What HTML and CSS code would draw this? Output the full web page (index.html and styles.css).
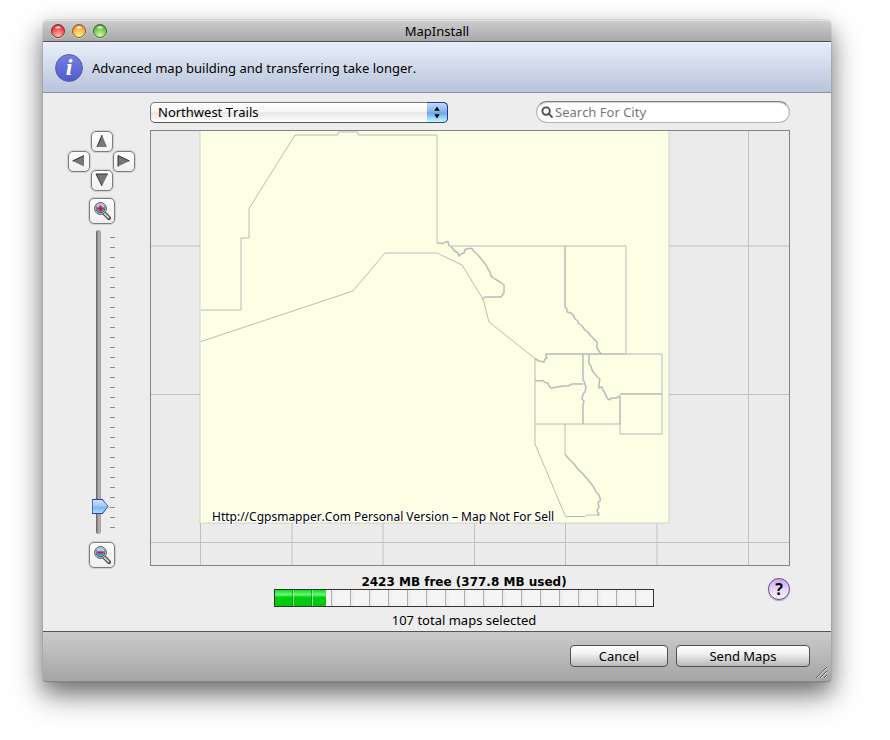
FILE: index.html
```html
<!DOCTYPE html>
<html lang="en">
<head>
<meta charset="utf-8">
<title>MapInstall</title>
<link rel="stylesheet" href="styles.css">
</head>
<body>
<main class="window">
  <header class="titlebar">
    <div class="lights">
      <button class="light red" type="button" aria-label="Close"></button>
      <button class="light amber" type="button" aria-label="Minimize"></button>
      <button class="light green" type="button" aria-label="Zoom"></button>
    </div>
    <h1 class="title">MapInstall</h1>
  </header>

  <section class="notice">
    <span class="info" aria-hidden="true">i</span>
    <p>Advanced map building and transferring take longer.</p>
  </section>

  <section class="content">
    <div class="toolbar">
      <div class="picker">
        <select aria-label="Map product">
          <option>Northwest Trails</option>
        </select>
        <svg class="picker-cap" viewBox="0 0 21 21" aria-hidden="true">
          <path d="M10.500 4l3 4.500h-6zM10.500 17l3-4.500h-6z"/>
        </svg>
      </div>
      <label class="search">
        <svg viewBox="0 0 14 14" aria-hidden="true">
          <circle cx="5.500" cy="5.500" r="4"/>
          <path d="M8.500 8.500l4 4"/>
        </svg>
        <input type="text" placeholder="Search For City" aria-label="Search For City">
      </label>
    </div>

    <div class="controls">
      <div class="pad">
        <button class="key up" type="button" aria-label="Pan up"><svg viewBox="0 0 22 21"><path d="M11 4l5 12H6z"/><path class="edge" d="M11 4L6 16"/></svg></button>
        <button class="key left" type="button" aria-label="Pan left"><svg viewBox="0 0 22 21"><path d="M4.500 10L16 4.500v11z"/><path class="edge" d="M4.500 10L16 4.500"/></svg></button>
        <button class="key right" type="button" aria-label="Pan right"><svg viewBox="0 0 22 21"><path d="M16.500 10L5 4.500v11z"/><path class="edge" d="M5 15.500v-11l11.500 5.500"/></svg></button>
        <button class="key down" type="button" aria-label="Pan down"><svg viewBox="0 0 22 21"><path d="M11 16l6-12H5z"/><path class="edge" d="M17 4H5l6 12"/></svg></button>
      </div>
      <button class="key zoom" type="button" aria-label="Zoom in">
        <svg viewBox="0 0 26 26">
          <path class="grip-dark" d="M15 15l5 5"/><path class="grip-light" d="M15.500 15.500l4 4"/>
          <circle class="lens-rim" cx="11.500" cy="10.500" r="6"/><circle class="lens" cx="11.500" cy="10.500" r="4.500"/>
          <path class="lens-shine" d="M7.500 9.500a4 4 0 0 1 8 0z"/>
          <path class="sign" d="M8.500 10.500h6M11.500 7.500v6"/>
        </svg>
      </button>
      <div class="slider">
        <input type="range" min="0" max="29" value="2" aria-label="Map zoom">
        <div class="ticks"></div>
      </div>
      <button class="key zoom" type="button" aria-label="Zoom out">
        <svg viewBox="0 0 26 26">
          <path class="grip-dark" d="M15 15l5 5"/><path class="grip-light" d="M15.500 15.500l4 4"/>
          <circle class="lens-rim" cx="11.500" cy="10.500" r="6"/><circle class="lens" cx="11.500" cy="10.500" r="4.500"/>
          <path class="lens-shine" d="M7.500 9.500a4 4 0 0 1 8 0z"/>
          <path class="sign" d="M8.500 10.500h6"/>
        </svg>
      </button>
    </div>

    <svg class="map" viewBox="151 131 638 434" role="img" aria-label="Map coverage">
      <path class="graticule" d="M200.500 131V565M292 523V565M383 523V565M474.500 523V565M565.500 523V565M657 523V565M748.500 131V565M151 246H789M151 394.500H789M151 542.500H789"/>
      <rect class="sheet" x="200" y="120" width="469" height="403"/>
      <g class="tiles">
        <path d="M201 310H241V238H249V208.500L295 135H338V132H358V135H437V243"/>
        <path d="M201 341.500L353 291L385 253H437L462 265L483 299L489 322L535 358.500"/>
        <path d="M451 246H626V354H662V434H620"/>
        <path d="M535 359V444L565.500 516.500H585L587 515H597L599 513"/>
        <path d="M535 424H620V434M565 424V454"/>
      </g>
      <g class="shared">
        <path d="M437 243L443 243.500L445 242L448 241.500L449 245.500L452 247.500L454 250.500L458 253L459 256L461 254L464 253L465 249.500L468 248.500L472 248.500L474 251.500L478 255L482 260L486 265L488 269L490 272L491 276L495 279L500 282L504 285V293L501 297H485L482 299"/>
        <path d="M565 246V307L567 309V312L571 313L574 316L575 319L578 321V323L582 326L585 330L588 332L590 335L594 339L597 342V348L599 351L601 354"/>
        <path d="M535 358.500L539 361L544 362L545 359L547 358L546 356L546 354H626"/>
        <path d="M583 354V380L584 381L585 385L586 386L585 392L583 394L582 399L584 401L583 405V424"/>
        <path d="M535 380.500L540 381L543 380.500L545 382.500L548 383L549 386L551 388L557 387L563 386L568 386L572 384H583"/>
        <path d="M589 354V364L591 366L592 370L594 373L596 375L597 377L600 379L599 384V388L602 387L603 390L605 393L606 396L608 399L610 400L611 398L616 398L620 396V424"/>
        <path d="M620 394H662"/>
        <path d="M565 454L568 458L574 464L578 469L583 474L589 481L593 486L596 492L599 495L600.500 500L598 503L599 507L597 511L599 514L598 516"/>
      </g>
      <text x="212" y="521">Http://Cgpsmapper.Com Personal Version – Map Not For Sell</text>
    </svg>

    <div class="status">
      <div class="usage">
        <label class="free" for="space">2423 MB free (377.8 MB used)</label>
        <progress id="space" max="2800.8" value="377.8"></progress>
        <p>107 total maps selected</p>
      </div>
      <button class="help" type="button" aria-label="Help">?</button>
    </div>
  </section>

  <footer class="footer">
    <button class="push cancel" type="button">Cancel</button>
    <button class="push send" type="button">Send Maps</button>
    <svg class="resize" viewBox="0 0 12 12" aria-hidden="true">
      <path class="groove-light" d="M2 12L12 2M6 12l6-6M10 12l2-2"/>
      <path class="groove" d="M1 12L12 1M5 12l7-7M9 12l3-3"/>
    </svg>
  </footer>
</main>
</body>
</html>
```
FILE: styles.css
```css
* { box-sizing: border-box; }
body {
  margin: 0;
  padding: 20px 59px 58px 43px;
  background: #fff;
  color: #000;
  font: 13px/18px "Noto Sans", sans-serif;
  font-kerning: none;
}
button, input, select { font: inherit; font-kerning: none; color: inherit; margin: 0; padding: 0; }
p, h1 { margin: 0; font: inherit; font-kerning: none; }

.window {
  border-radius: 5px 5px 4px 4px;
  background: #ededed;
  box-shadow: 0 0 1px rgba(0,0,0,.6), 0 10px 20px rgba(0,0,0,.34), 0 14px 34px rgba(0,0,0,.34);
}

.titlebar {
  display: grid;
  grid-template-columns: 1fr auto 1fr;
  align-items: center;
  height: 22px;
  padding: 0 8px;
  border-bottom: 1px solid #515151;
  border-radius: 5px 5px 0 0;
  background: linear-gradient(#cfcfcf, #a8a8a8);
  box-shadow: inset 0 1px #e2e2e2;
}
.lights { display: flex; gap: 7px; }
.light {
  width: 14px;
  height: 14px;
  border: 1px solid;
  border-radius: 50%;
  box-shadow: 0 1px rgba(255,255,255,.4);
}
.red { border-color: #8b2b2b; background: radial-gradient(ellipse 4px 2px at 50% 20%, #fff, transparent), radial-gradient(circle at 50% 90%, #ffc4c4, #f0484c 60%, #a81218); }
.amber { border-color: #9a5c25; background: radial-gradient(ellipse 4px 2px at 50% 20%, #fff, transparent), radial-gradient(circle at 50% 90%, #fff58e, #f5b04c 60%, #b85c18); }
.green { border-color: #3c702b; background: radial-gradient(ellipse 4px 2px at 50% 20%, #fff, transparent), radial-gradient(circle at 50% 90%, #d4fa9c, #7cc450 60%, #2f7a20); }

.notice {
  display: flex;
  align-items: center;
  gap: 9px;
  height: 51px;
  padding: 1px 12px 0;
  border-bottom: 1px solid #8592a2;
  background: linear-gradient(#e9effb, #b9c4da);
}
.info {
  width: 28px;
  height: 28px;
  border: 1px solid #5560a8;
  border-radius: 50%;
  background: linear-gradient(#7480de, #4f5bd2);
  color: #fff;
  font: italic bold 24px/25px "Liberation Serif", serif;
  text-align: center;
}

.content {
  display: grid;
  grid-template-columns: 67px 1fr;
  column-gap: 15px;
  padding: 8px 41px 2px 25px;
}
.toolbar {
  grid-column: 2;
  display: flex;
  justify-content: space-between;
  align-items: center;
  margin-bottom: 7px;
}
.picker { position: relative; width: 298px; height: 21px; }
.picker select {
  width: 100%;
  height: 21px;
  padding: 0 26px 0 7px;
  appearance: none;
  border: 1px solid #777;
  border-bottom-color: #555;
  border-radius: 5px;
  background: linear-gradient(#fff, #f5f5f5 45%, #e8e8e8 50%, #fff);
}
.picker-cap {
  position: absolute;
  top: 0;
  right: 0;
  width: 21px;
  height: 21px;
  border: 1px solid #2c32a0;
  border-left: 0;
  border-bottom-color: #3a4a66;
  border-radius: 0 5px 5px 0;
  background: linear-gradient(#c4dcf6, #7cb2ee 48%, #68a6ea 52%, #c4fbff);
  pointer-events: none;
}
.search {
  display: flex;
  align-items: center;
  gap: 1px;
  width: 254px;
  height: 22px;
  padding: 0 4px;
  border: 1px solid #b4b4b4;
  border-top-color: #808080;
  border-radius: 11px;
  background: #fff;
  box-shadow: inset 0 1px 1px #ccc;
}
.search svg { flex: none; width: 13px; height: 13px; fill: none; stroke: #4c4c4c; stroke-width: 2; }
.search input { flex: 1; min-width: 0; border: 0; outline: 0; background: none; }
.search input::placeholder { color: #777; opacity: 1; }

/* The pan and zoom column sits beside the map and never makes its row taller. */
.controls { display: flex; flex-direction: column; align-items: center; height: 0; }
.pad {
  display: grid;
  grid-template-columns: 22px 22px 22px;
  grid-template-rows: 20px 19px 21px;
  justify-content: space-between;
  width: 67px;
  margin: 1px 0 7px;
}
.key {
  width: 22px;
  height: 21px;
  border: 1px solid #7d7d7d;
  border-radius: 5px;
  background: linear-gradient(#fff, #f0f0f0);
  box-shadow: 0 0 1px 1px rgba(0,0,0,.13);
}
.key svg { display: block; width: 22px; height: 21px; margin: -1px; fill: #777; }
.edge { fill: none; stroke: #333; }
.up { grid-area: 1 / 2; }
.left { grid-area: 2 / 1; }
.right { grid-area: 2 / 3; }
.down { grid-area: 3 / 2; }
.key.zoom, .key.zoom svg { width: 26px; height: 26px; }
.zoom { flex: none; }
.lens-rim { fill: #ccc; stroke: #666; }
.lens { fill: #39a5e8; stroke: #4a6270; }
.lens-shine { fill: #b4c6ec; }
.sign { stroke: #e8101c; stroke-width: 2; }
.grip-dark { stroke: #444; stroke-width: 4; stroke-linecap: round; }
.grip-light { stroke: #ccc; stroke-width: 2; stroke-linecap: round; }

.slider {
  display: flex;
  gap: 3px;
  width: 26px;
  height: 304px;
  padding-left: 1px;
  margin: 6px 0 8px;
}
.slider input {
  flex: none;
  width: 17px;
  height: 304px;
  writing-mode: vertical-lr;
  direction: rtl;
  appearance: none;
  background: none;
}
.slider input::-webkit-slider-runnable-track {
  width: 5px;
  height: 304px;
  border-radius: 3px;
  background: linear-gradient(90deg, #756c6e 1px, #a9a5a5 2px, #b5b1b1 4px, #999 5px);
}
.slider input::-webkit-slider-thumb {
  appearance: none;
  width: 17px;
  height: 15px;
  margin-left: -4px;
  border: 0;
  clip-path: polygon(0 1px, 1px 0, 11px 0, 100% 50%, 11px 100%, 1px 100%, 0 14px);
  background:
    linear-gradient(to top right, transparent calc(50% - 1px), #2c3cb4 50%) 100% 0 / 7px 8px no-repeat,
    linear-gradient(to bottom right, transparent calc(50% - 1px), #2c3cb4 50%) 100% 100% / 7px 8px no-repeat,
    linear-gradient(#2c3cb4, #2c3cb4) 0 0 / 11px 1px no-repeat,
    linear-gradient(#2c3cb4, #2c3cb4) 0 100% / 11px 1px no-repeat,
    linear-gradient(#4a60cc, #4a60cc) 0 0 / 1px 15px no-repeat,
    linear-gradient(#d8eafc, #9ccaf8 48%, #78b4f2 54%, #b4e4ff);
}
.ticks {
  flex: none;
  width: 5px;
  height: 291px;
  margin-top: 7px;
  background: repeating-linear-gradient(#8c8c8c 0 1px, transparent 1px 10px);
}

.map {
  display: block;
  width: 100%;
  height: auto;
  border: 1px solid #848484;
  background: #ebebeb;
}
.graticule { stroke: #c0c0c0; }
.sheet { fill: #fdffe5; stroke: #d2d2c8; }
.tiles, .shared { fill: none; stroke: #bababa; stroke-linejoin: round; }
.shared { stroke-width: 1.500; }
.map text {
  font-size: 12px;
  fill: #000;
  stroke: #fff;
  stroke-width: 2;
  paint-order: stroke;
}

.status {
  grid-column: 2;
  display: grid;
  grid-template-columns: 1fr 22px;
  padding: 8px 0 0 10px;
}
.usage { display: flex; flex-direction: column; align-items: center; }
.free {
  height: 15px;
  font: bold 12px/17px "DejaVu Sans", sans-serif;
}
progress {
  display: block;
  width: 380px;
  height: 18px;
  margin-bottom: 4px;
  appearance: none;
  border: 1px solid #333;
}
progress::-webkit-progress-bar {
  background: repeating-linear-gradient(90deg, #ebebeb 0, #f5f5f5 4px 18px, #adadad 18px 19px);
}
progress::-webkit-progress-value {
  background:
    repeating-linear-gradient(90deg, transparent 0 17px, rgba(0,80,0,.4) 17px 18px, rgba(255,255,255,.5) 18px 19px),
    linear-gradient(#0be01c, #6cf67c 30%, #00d010 45%, #00c60c);
}
.help {
  width: 22px;
  height: 22px;
  margin-top: 4px;
  border: 1px solid #6c4a90;
  border-radius: 50%;
  background: linear-gradient(#c9a4ec, #e8d4fa 50%, #fbf0ff);
  font-size: 16px;
  font-weight: bold;
  line-height: 20px;
  box-shadow: 0 1px 1px rgba(0,0,0,.3);
}

.footer {
  position: relative;
  display: flex;
  justify-content: flex-end;
  gap: 8px;
  padding: 13px 21px 14px;
  border-top: 1px solid #555;
  border-bottom: 1px solid #888;
  border-radius: 0 0 4px 4px;
  background: linear-gradient(#cbcbcb, #a5a5a5);
}
.push {
  height: 22px;
  border: 1px solid #505050;
  border-radius: 4px;
  background: linear-gradient(#fff, #f0f0f0 40%, #b8b8b8);
  line-height: 20px;
}
.cancel { width: 98px; }
.send { width: 134px; }
.resize { position: absolute; right: 4px; bottom: 3px; width: 12px; height: 12px; fill: none; }
.groove { stroke: #5c5c5c; }
.groove-light { stroke: #ddd; }
```
